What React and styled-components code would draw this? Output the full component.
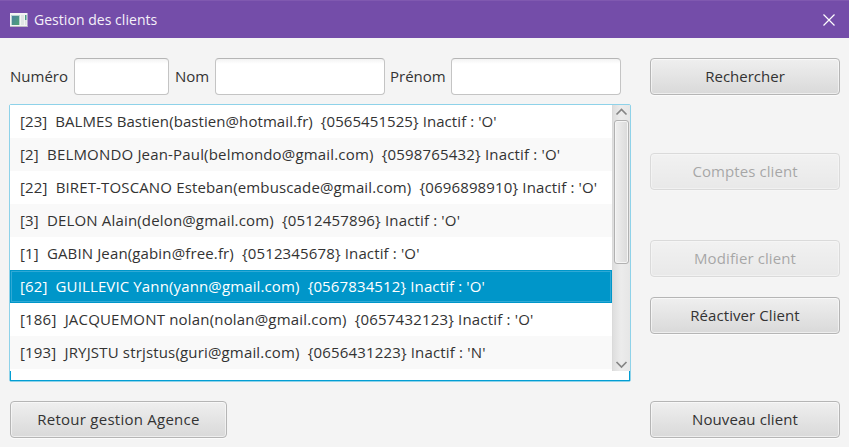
import React from "react";
import styled, { createGlobalStyle, css } from "styled-components";

const GlobalStyle = createGlobalStyle`
  * { box-sizing: border-box; }
  body {
    margin: 0;
    background: #f4f4f4;
    font-family: "Open Sans", "Noto Sans", sans-serif;
    font-size: 15px;
    color: #333;
  }
`;

const Window = styled.div`
  width: 849px;
  height: 447px;
  overflow: hidden;
  background: #f4f4f4;
`;

const TitleBar = styled.header`
  display: flex;
  align-items: center;
  height: 38px;
  padding: 0 13px 0 10px;
  background: #744da9;
  border-top: 1px solid #8059b0;
  color: #f5f1f9;
  font-size: 14px;
`;

const Title = styled.h1`
  flex: 1;
  margin: 0 0 0 6px;
  font-size: 14px;
  font-weight: 400;
  line-height: 20px;
  letter-spacing: 0.04px;
`;

const CloseButton = styled.button`
  display: flex;
  padding: 0;
  border: 0;
  background: none;
`;

const Content = styled.main`
  display: grid;
  grid-template-columns: 622px 190px;
  column-gap: 19px;
  padding: 20px 0 0 9px;
`;

const MainColumn = styled.section`
  display: flex;
  flex-direction: column;
`;

const SearchRow = styled.div`
  display: flex;
  height: 37px;
  padding-left: 1px;
  margin-bottom: 9px;
`;

const Label = styled.label`
  width: ${(p) => p.$width}px;
  line-height: 36px;
  white-space: nowrap;
`;

const TextField = styled.input`
  width: ${(p) => p.$width}px;
  height: 37px;
  margin-right: ${(p) => p.$after || 0}px;
  padding: 0 8px;
  border: 1px solid #c4c4c4;
  border-top-color: #b5b5b5;
  border-radius: 4px;
  background: linear-gradient(#f3f3f3, #fff 5px);
  font: inherit;
  outline: none;
`;

const ListBox = styled.div`
  display: flex;
  flex-direction: column;
  height: 278px;
  border: 1px solid #8ed2e9;
  border-radius: 2px;
  background: #fff;
`;

const Viewport = styled.div`
  display: flex;
  height: 266px;
`;

const List = styled.ul`
  flex: 1;
  min-width: 0;
  margin: 0;
  padding: 0;
  list-style: none;
`;

const ListFooter = styled.div`
  height: 10px;
  border: solid #039ed3;
  border-width: 0 1px 1px;
`;

const Item = styled.li`
  height: 33px;
  padding-left: 10px;
  line-height: 33px;
  white-space: pre;
  letter-spacing: ${(p) => p.$tracking}px;
  background: ${(p) => (p.$striped ? "#f9f9f9" : "#fff")};
  ${(p) =>
    p.$selected &&
    css`
      background: #0096c9;
      color: #fff;
      box-shadow: inset 0 0 0 1px #0096c9, inset 0 0 0 2px #30a9d5;
    `}
`;

const ScrollBar = styled.div`
  display: flex;
  flex-direction: column;
  align-items: center;
  width: 18px;
  height: 266px;
  background: linear-gradient(90deg, #d6d6d6 0, #dedede 1px, #ececec 9px, #e6e6e6);
`;

const Arrow = styled.svg`
  display: block;
  width: 18px;
  height: 15px;
`;

const Thumb = styled.div`
  width: 15px;
  height: 144px;
  margin-bottom: 92px;
  border: 1px solid #b1b1b1;
  border-radius: 3px;
  background: linear-gradient(90deg, #efefef, #dadada);
  box-shadow: inset 0 0 0 1px #f5f5f5;
`;

const Actions = styled.aside`
  display: flex;
  flex-direction: column;
`;

const Button = styled.button`
  width: ${(p) => p.$width || 190}px;
  height: 37px;
  flex: none;
  margin: ${(p) => p.$top || 0}px 0 0 ${(p) => p.$left || 0}px;
  padding: 0 0 1px;
  border: 1px solid #b5b5b5;
  border-radius: 4px;
  background: linear-gradient(#efefef, #d9d9d9);
  box-shadow: inset 0 0 0 1px rgba(255, 255, 255, 0.55), 0 1px 0 #fbfbfb;
  color: #333;
  font: inherit;
  letter-spacing: ${(p) => p.$tracking || 0}px;
  white-space: nowrap;
  &:disabled { opacity: 0.4; }
`;

const clients = [
  ["[23]  BALMES Bastien(bastien@hotmail.fr)  {0565451525} Inactif : 'O'", 0.075],
  ["[2]  BELMONDO Jean-Paul(belmondo@gmail.com)  {0598765432} Inactif : 'O'", 0.175],
  ["[22]  BIRET-TOSCANO Esteban(embuscade@gmail.com)  {0696898910} Inactif : 'O'", 0.145],
  ["[3]  DELON Alain(delon@gmail.com)  {0512457896} Inactif : 'O'", 0.16],
  ["[1]  GABIN Jean(gabin@free.fr)  {0512345678} Inactif : 'O'", 0.14],
  ["[62]  GUILLEVIC Yann(yann@gmail.com)  {0567834512} Inactif : 'O'", 0.13],
  ["[186]  JACQUEMONT nolan(nolan@gmail.com)  {0657432123} Inactif : 'O'", 0.185],
  ["[193]  JRYJSTU strjstus(guri@gmail.com)  {0656431223} Inactif : 'N'", 0.165],
];
const selectedIndex = 5;

function WindowIcon() {
  return (
    <svg width="18" height="16" viewBox="0 0 18 16">
      <defs>
        <linearGradient id="pane" x1="0" y1="0" x2="1" y2="1">
          <stop offset="0" stopColor="#4b80a0" />
          <stop offset="1" stopColor="#4fa274" />
        </linearGradient>
      </defs>
      <path d="M0 1h17.5v14H0z" fill="#f3f3f3" />
      <path d="M0 14h17.5v1H0z" fill="#bdb9c2" />
      <path d="M1 3h9v10H1z" fill="#bad2d1" />
      <path d="M2 4h7v9H2z" fill="url(#pane)" />
      <path d="M11 3h3v10h-3z" fill="#e1e5e5" />
      <path d="M15 3h1.5v5H15z" fill="#4b9a88" />
      <path d="M15 8h1.5v5H15z" fill="#dbe4df" />
    </svg>
  );
}

export default function App() {
  return (
    <>
      <GlobalStyle />
      <Window>
        <TitleBar>
          <WindowIcon />
          <Title>Gestion des clients</Title>
          <CloseButton aria-label="Fermer">
            <svg width="14" height="14" viewBox="0 0 14 14">
              <path d="M1.5 1.5l11 11M12.5 1.5l-11 11" stroke="#fff" strokeWidth="1.2" />
            </svg>
          </CloseButton>
        </TitleBar>
        <Content>
          <MainColumn>
            <SearchRow>
              <Label $width={64} htmlFor="numero">Numéro</Label>
              <TextField id="numero" $width={95} $after={6} />
              <Label $width={40} htmlFor="nom">Nom</Label>
              <TextField id="nom" $width={170} $after={5} />
              <Label $width={61} htmlFor="prenom">Prénom</Label>
              <TextField id="prenom" $width={170} />
            </SearchRow>
            <ListBox>
              <Viewport>
                <List>
                  {clients.map(([text, tracking], i) => (
                    <Item
                      key={text}
                      $tracking={tracking}
                      $striped={i % 2 === 1}
                      $selected={i === selectedIndex}
                    >
                      {text}
                    </Item>
                  ))}
                </List>
                <ScrollBar>
                  <Arrow viewBox="0 0 18 15">
                    <path d="M4.5 9.5L9.5 4.5L14.5 9.5" fill="none" stroke="#858585" strokeWidth="1.7" />
                  </Arrow>
                  <Thumb />
                  <Arrow viewBox="0 0 18 15">
                    <path d="M4.5 6L9.5 11L14.5 6" fill="none" stroke="#858585" strokeWidth="1.7" />
                  </Arrow>
                </ScrollBar>
              </Viewport>
              <ListFooter />
            </ListBox>
            <Button $width={217} $top={19} $left={1} $tracking={0.25}>
              Retour gestion Agence
            </Button>
          </MainColumn>
          <Actions>
            <Button>Rechercher</Button>
            <Button $top={58} $tracking={0.08} disabled>Comptes client</Button>
            <Button $top={50} $tracking={0.1} disabled>Modifier client</Button>
            <Button $top={20} $tracking={0.08}>Réactiver Client</Button>
            <Button $top={67} $tracking={0.1}>Nouveau client</Button>
          </Actions>
        </Content>
      </Window>
    </>
  );
}
